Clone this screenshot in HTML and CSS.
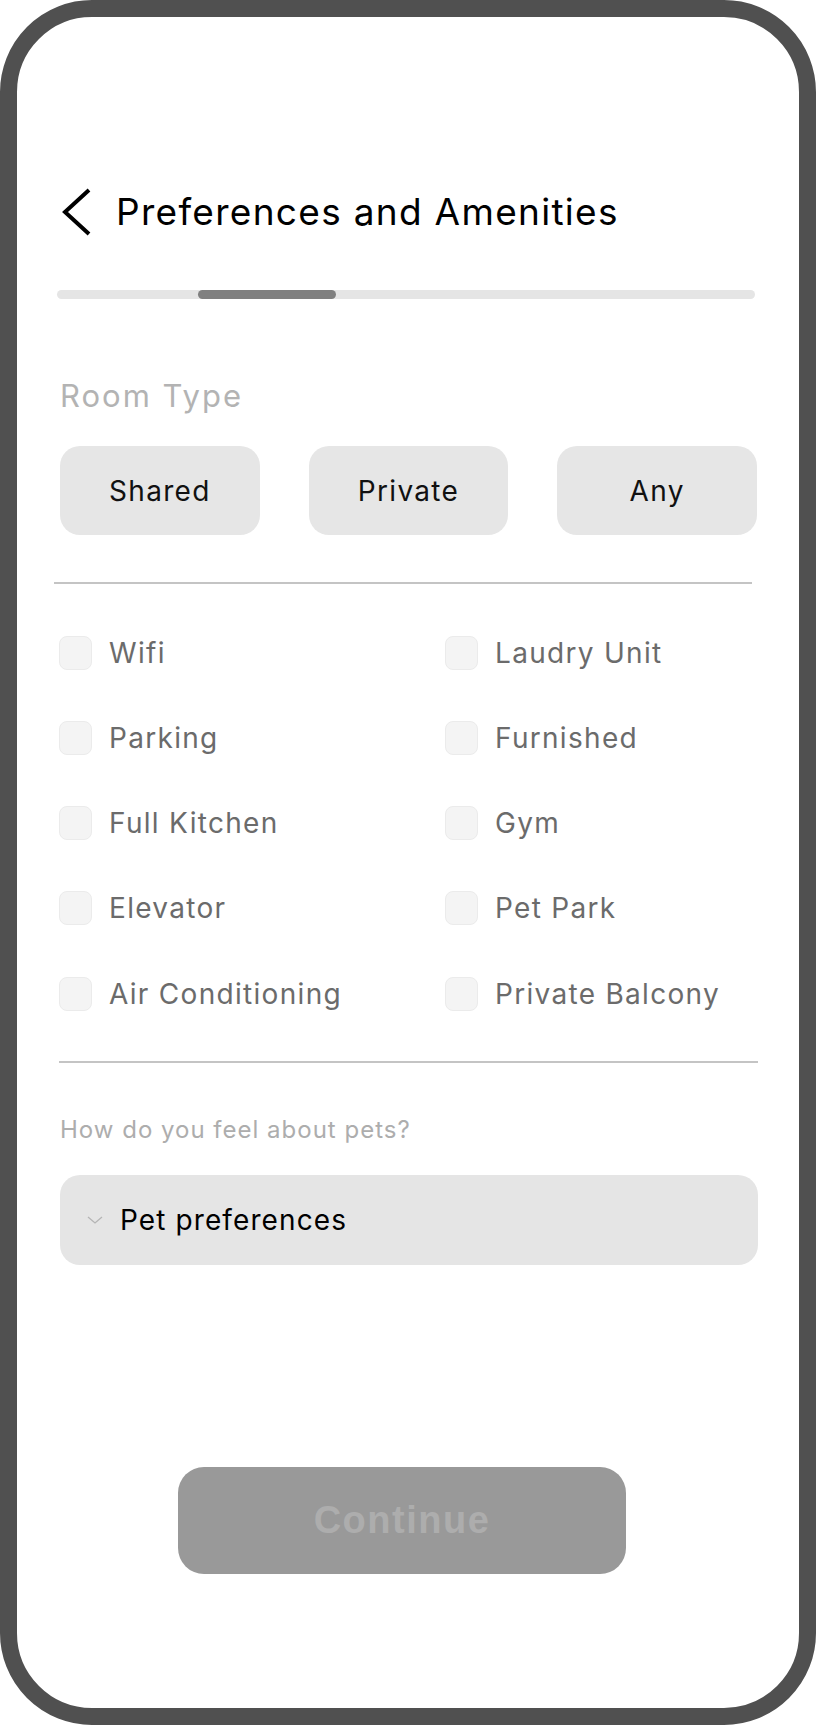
FILE: index.html
```html
<!DOCTYPE html>
<html lang="en">
<head>
<meta charset="utf-8">
<title>Preferences and Amenities</title>
<link rel="stylesheet" href="styles.css">
</head>
<body>
<div class="phone">
  <div class="screen">
    <header class="header">
      <svg class="back" width="32" height="50" viewBox="0 0 32 50" aria-hidden="true">
        <path d="M29 3 L5 25 L29 47" fill="none" stroke="#000" stroke-width="4"/>
      </svg>
      <h1 class="title">Preferences and Amenities</h1>
    </header>

    <div class="progress"><div class="progress-fill"></div></div>

    <h2 class="section-label">Room Type</h2>
    <div class="room-options">
      <button class="room-btn">Shared</button>
      <button class="room-btn">Private</button>
      <button class="room-btn">Any</button>
    </div>

    <hr class="divider divider-top">

    <ul class="amenities">
      <li class="amenity"><span class="check"></span><span class="amenity-label">Wifi</span></li>
      <li class="amenity"><span class="check"></span><span class="amenity-label">Laudry Unit</span></li>
      <li class="amenity"><span class="check"></span><span class="amenity-label">Parking</span></li>
      <li class="amenity"><span class="check"></span><span class="amenity-label">Furnished</span></li>
      <li class="amenity"><span class="check"></span><span class="amenity-label">Full Kitchen</span></li>
      <li class="amenity"><span class="check"></span><span class="amenity-label">Gym</span></li>
      <li class="amenity"><span class="check"></span><span class="amenity-label">Elevator</span></li>
      <li class="amenity"><span class="check"></span><span class="amenity-label">Pet Park</span></li>
      <li class="amenity"><span class="check"></span><span class="amenity-label">Air Conditioning</span></li>
      <li class="amenity"><span class="check"></span><span class="amenity-label">Private Balcony</span></li>
    </ul>

    <hr class="divider divider-bottom">

    <p class="question">How do you feel about pets?</p>
    <button class="dropdown">
      <svg class="dd-chevron" width="16" height="8" viewBox="0 0 16 8" aria-hidden="true">
        <path d="M1 1 L8 7 L15 1" fill="none" stroke="#b5b5b5" stroke-width="1.3"/>
      </svg>
      <span class="dd-text">Pet preferences</span>
    </button>

    <button class="continue">Continue</button>
  </div>
</div>
</body>
</html>
```

FILE: styles.css
```css
* { box-sizing: border-box; }
html, body { margin: 0; padding: 0; background: #ffffff; }
body { font-family: "Inter", "Noto Sans", sans-serif; }

.phone {
  width: 816px;
  height: 1725px;
  border: 17px solid #505050;
  border-radius: 92px;
  background: #ffffff;
  overflow: hidden;
}

.screen {
  display: flex;
  flex-direction: column;
  align-items: flex-start;
  padding: 170px 42px 0 43px;
}

.header {
  display: flex;
  align-items: center;
  height: 50px;
}
.back { display: block; flex: none; }
.title {
  margin: 0 0 0 24px;
  font-size: 37px;
  font-weight: 400;
  line-height: 50px;
  color: #000;
  letter-spacing: 1.3px;
}

.progress {
  margin: 53px 0 0 -3px;
  width: 698px;
  height: 9px;
  border-radius: 5px;
  background: #e5e5e5;
  display: flex;
}
.progress-fill {
  margin-left: 141px;
  width: 138px;
  height: 9px;
  border-radius: 5px;
  background: #808080;
}

.section-label {
  margin: 77px 0 0 0;
  font-size: 31px;
  font-weight: 400;
  line-height: 40px;
  color: #b3b3b3;
  letter-spacing: 2px;
}

.room-options {
  margin-top: 30px;
  width: 697px;
  display: grid;
  grid-template-columns: 1fr 1fr 1fr;
  column-gap: 49px;
}
.room-btn {
  height: 89px;
  border: none;
  border-radius: 20px;
  background: #e6e6e6;
  font-family: inherit;
  font-size: 28px;
  color: #111;
  padding: 0;
  letter-spacing: 1.3px;
}

.divider {
  margin: 0;
  border: none;
  height: 2px;
  background: #c4c4c4;
}
.divider-top { margin: 47px 0 0 -6px; width: 698px; }
.divider-bottom { margin: 25px 0 0 -1px; width: 699px; }

.amenities {
  list-style: none;
  margin: 26px 0 0 -1px;
  padding: 0;
  width: 699px;
  display: grid;
  grid-template-columns: 386px 1fr;
  grid-auto-rows: 85.25px;
}
.amenity {
  display: flex;
  align-items: center;
}
.check {
  flex: none;
  width: 33px;
  height: 34px;
  border-radius: 8px;
  background: #f4f4f4;
  border: 1px solid #ebebeb;
}
.amenity-label {
  margin-left: 17px;
  font-size: 28px;
  color: #6b6b6b;
  letter-spacing: 1.3px;
}

.question {
  margin: 52px 0 0 0;
  font-size: 24px;
  line-height: 30px;
  color: #adadad;
  letter-spacing: 1px;
}

.dropdown {
  margin-top: 30px;
  width: 698px;
  height: 90px;
  border: none;
  border-radius: 20px;
  background: #e5e5e5;
  display: flex;
  align-items: center;
  padding: 0 0 0 27px;
  font-family: inherit;
}
.dd-chevron { display: block; flex: none; }
.dd-text {
  margin-left: 17px;
  font-size: 28px;
  color: #000;
  letter-spacing: 1.1px;
}

.continue {
  margin: 202px 0 0 118px;
  width: 448px;
  height: 107px;
  border: none;
  border-radius: 26px;
  background: #999999;
  color: #adadad;
  font-family: "Liberation Sans", Arial, sans-serif;
  font-weight: 700;
  font-size: 38px;
  letter-spacing: 1.5px;
  padding: 0;
}
```
